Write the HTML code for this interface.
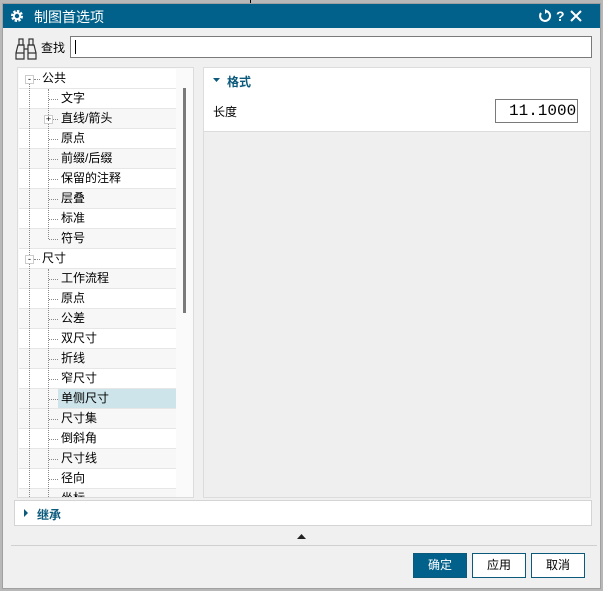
<!DOCTYPE html>
<html><head><meta charset="utf-8"><style>
*{margin:0;padding:0;box-sizing:border-box}
body{width:603px;height:591px;background:#b8b8b8;position:relative;overflow:hidden;font-family:"Liberation Sans","Noto Sans CJK SC",sans-serif;font-size:12px;color:#000}
.win{position:absolute;left:2px;top:3px;width:599px;height:586px;background:#f0f0f0;border:1px solid #a0a0a0}
.title{position:absolute;left:0;top:0;width:597px;height:24px;background:#02618a;color:#fff;font-size:14px}
.abs{position:absolute}
.row{position:absolute;left:0;width:157px;height:20px;border-bottom:1px solid #e6e6e6;line-height:19px}
.row span{position:absolute;top:0}
.vl{position:absolute;width:0;border-left:1px dotted #888;z-index:2}
.hl{position:absolute;height:0;border-top:1px dotted #888;z-index:2}
.box{position:absolute;width:9px;height:9px;background:#fff;border:1px solid #ccc;font-size:9px;line-height:7px;text-align:center;z-index:3}
.btn{position:absolute;top:549px;height:25px;width:54px;border:1px solid #0b5a7c;background:#fff;text-align:center;line-height:23px;font-size:12px}
</style></head><body>
<div class="abs" style="left:250px;top:0;width:1px;height:3px;background:#000"></div>
<div class="win">
 <div class="title">
  <svg class="abs" style="left:7px;top:5px" width="14" height="14" viewBox="0 0 14 14"><circle cx="7" cy="7" r="4.5" fill="none" stroke="#fff" stroke-width="3" stroke-dasharray="2.2 1.3"/><circle cx="7" cy="7" r="3.2" fill="none" stroke="#fff" stroke-width="2"/></svg>
  <span class="abs" style="left:31px;top:3px">制图首选项</span>
  <svg class="abs" style="left:535px;top:5px" width="60" height="14" viewBox="0 0 60 14"><path d="M3 4 A5 5 0 1 0 8 2" fill="none" stroke="#fff" stroke-width="2"/><path d="M7 0 L10 2.5 L7 5 Z" fill="#fff"/><text x="18" y="12" fill="#fff" font-size="14" font-weight="bold" font-family="Liberation Sans">?</text><path d="M33 2 L43 12 M43 2 L33 12" stroke="#fff" stroke-width="2"/></svg>
 </div>
 <svg class="abs" style="left:11px;top:33px" width="26" height="24" viewBox="0 0 26 24"><g fill="none" stroke="#333" stroke-width="1.2"><rect x="5" y="2" width="4" height="6"/><rect x="15" y="2" width="4" height="6"/><path d="M4 8 L2 16 L2 22 L10 22 L10 8 Z M14 8 L14 22 L22 22 L22 16 L20 8 Z M10 12 L14 12"/><path d="M2 16 L10 16 M14 16 L22 16"/></g></svg>
 <span class="abs" style="left:38px;top:35px">查找</span>
 <div class="abs" style="left:67px;top:32px;width:522px;height:22px;background:#fff;border:1px solid #7a7a7a"><div class="abs" style="left:4px;top:3px;width:1px;height:14px;background:#000"></div></div>
 <div class="abs" style="left:14px;top:63px;width:177px;height:431px;background:#fafafa;border:1px solid #dcdcdc;overflow:hidden">
  <div class="abs" style="left:1px;top:1px;width:157px;height:429px;background:#fff;overflow:hidden">
   <div class="row" style="top:0"><span style="left:23px">公共</span></div>
   <div class="row" style="top:20px"><span style="left:42px">文字</span></div>
   <div class="row" style="top:40px;background:#f7f7f7"><span style="left:42px">直线/箭头</span></div>
   <div class="row" style="top:60px"><span style="left:42px">原点</span></div>
   <div class="row" style="top:80px;background:#f7f7f7"><span style="left:42px">前缀/后缀</span></div>
   <div class="row" style="top:100px"><span style="left:42px">保留的注释</span></div>
   <div class="row" style="top:120px;background:#f7f7f7"><span style="left:42px">层叠</span></div>
   <div class="row" style="top:140px"><span style="left:42px">标准</span></div>
   <div class="row" style="top:160px;background:#f7f7f7"><span style="left:42px">符号</span></div>
   <div class="row" style="top:180px"><span style="left:23px">尺寸</span></div>
   <div class="row" style="top:200px;background:#f7f7f7"><span style="left:42px">工作流程</span></div>
   <div class="row" style="top:220px"><span style="left:42px">原点</span></div>
   <div class="row" style="top:240px;background:#f7f7f7"><span style="left:42px">公差</span></div>
   <div class="row" style="top:260px"><span style="left:42px">双尺寸</span></div>
   <div class="row" style="top:280px;background:#f7f7f7"><span style="left:42px">折线</span></div>
   <div class="row" style="top:300px"><span style="left:42px">窄尺寸</span></div>
   <div class="row" style="top:320px;background:#f7f7f7"></div>
   <div class="row" style="top:320px;background:#cde4ea;left:39px;width:118px;z-index:1"><span style="left:3px">单侧尺寸</span></div>
   <div class="row" style="top:340px;background:#f7f7f7"><span style="left:42px">尺寸集</span></div>
   <div class="row" style="top:360px"><span style="left:42px">倒斜角</span></div>
   <div class="row" style="top:380px;background:#f7f7f7"><span style="left:42px">尺寸线</span></div>
   <div class="row" style="top:400px"><span style="left:42px">径向</span></div>
   <div class="row" style="top:420px;background:#f7f7f7"><span style="left:42px">坐标</span></div>
   <div class="vl" style="left:10px;top:14px;height:420px"></div>
   <div class="vl" style="left:29px;top:20px;height:150px"></div>
   <div class="vl" style="left:29px;top:200px;height:230px"></div>
   <div class="hl" style="left:15px;top:10px;width:6px"></div>
   <div class="hl" style="left:15px;top:190px;width:6px"></div>
   <div class="hl" style="left:30px;top:30px;width:9px"></div>
   <div class="hl" style="left:34px;top:50px;width:5px"></div>
   <div class="hl" style="left:30px;top:70px;width:9px"></div>
   <div class="hl" style="left:30px;top:90px;width:9px"></div>
   <div class="hl" style="left:30px;top:110px;width:9px"></div>
   <div class="hl" style="left:30px;top:130px;width:9px"></div>
   <div class="hl" style="left:30px;top:150px;width:9px"></div>
   <div class="hl" style="left:30px;top:170px;width:9px"></div>
   <div class="hl" style="left:30px;top:210px;width:9px"></div>
   <div class="hl" style="left:30px;top:230px;width:9px"></div>
   <div class="hl" style="left:30px;top:250px;width:9px"></div>
   <div class="hl" style="left:30px;top:270px;width:9px"></div>
   <div class="hl" style="left:30px;top:290px;width:9px"></div>
   <div class="hl" style="left:30px;top:310px;width:9px"></div>
   <div class="hl" style="left:30px;top:330px;width:9px"></div>
   <div class="hl" style="left:30px;top:350px;width:9px"></div>
   <div class="hl" style="left:30px;top:370px;width:9px"></div>
   <div class="hl" style="left:30px;top:390px;width:9px"></div>
   <div class="hl" style="left:30px;top:410px;width:9px"></div>
   <div class="box" style="left:6px;top:6px">-</div>
   <div class="box" style="left:25px;top:46px">+</div>
   <div class="box" style="left:6px;top:186px">-</div>
  </div>
  <div class="abs" style="left:165px;top:20px;width:3px;height:225px;background:#7a7a7a"></div>
 </div>
 <div class="abs" style="left:200px;top:63px;width:388px;height:431px;border:1px solid #dcdcdc;background:#efefef">
  <div class="abs" style="left:0;top:0;width:386px;height:64px;background:#fff;border-bottom:1px solid #dcdcdc">
   <svg class="abs" style="left:9px;top:10px" width="7" height="5"><path d="M0 0 L7 0 L3.5 4 Z" fill="#0b5a7c"/></svg>
   <span class="abs" style="left:23px;top:5px;color:#0b5a7c;font-weight:bold">格式</span>
   <span class="abs" style="left:9px;top:35px">长度</span>
   <div class="abs" style="left:291px;top:31px;width:83px;height:24px;border:1px solid #7a7a7a;overflow:hidden;font-family:'Liberation Mono',monospace;font-size:16px;line-height:22px;padding-left:13px;white-space:nowrap">11.10000</div>
  </div>
 </div>
 <div class="abs" style="left:11px;top:496px;width:578px;height:26px;background:#fff;border:1px solid #d4d4d4">
  <svg class="abs" style="left:9px;top:8px" width="5" height="8"><path d="M0 0 L4 4 L0 8 Z" fill="#0b5a7c"/></svg>
  <span class="abs" style="left:22px;top:5px;color:#0b5a7c;font-weight:bold">继承</span>
 </div>
 <svg class="abs" style="left:294px;top:530px" width="9" height="6"><path d="M0 5 L4.5 0 L9 5 Z" fill="#222"/></svg>
 <div class="abs" style="left:8px;top:541px;width:586px;height:1px;background:#d0d0d0"></div>
 <div class="btn" style="left:410px;background:#02618a;color:#fff">确定</div>
 <div class="btn" style="left:469px">应用</div>
 <div class="btn" style="left:528px">取消</div>
</div>
</body></html>
